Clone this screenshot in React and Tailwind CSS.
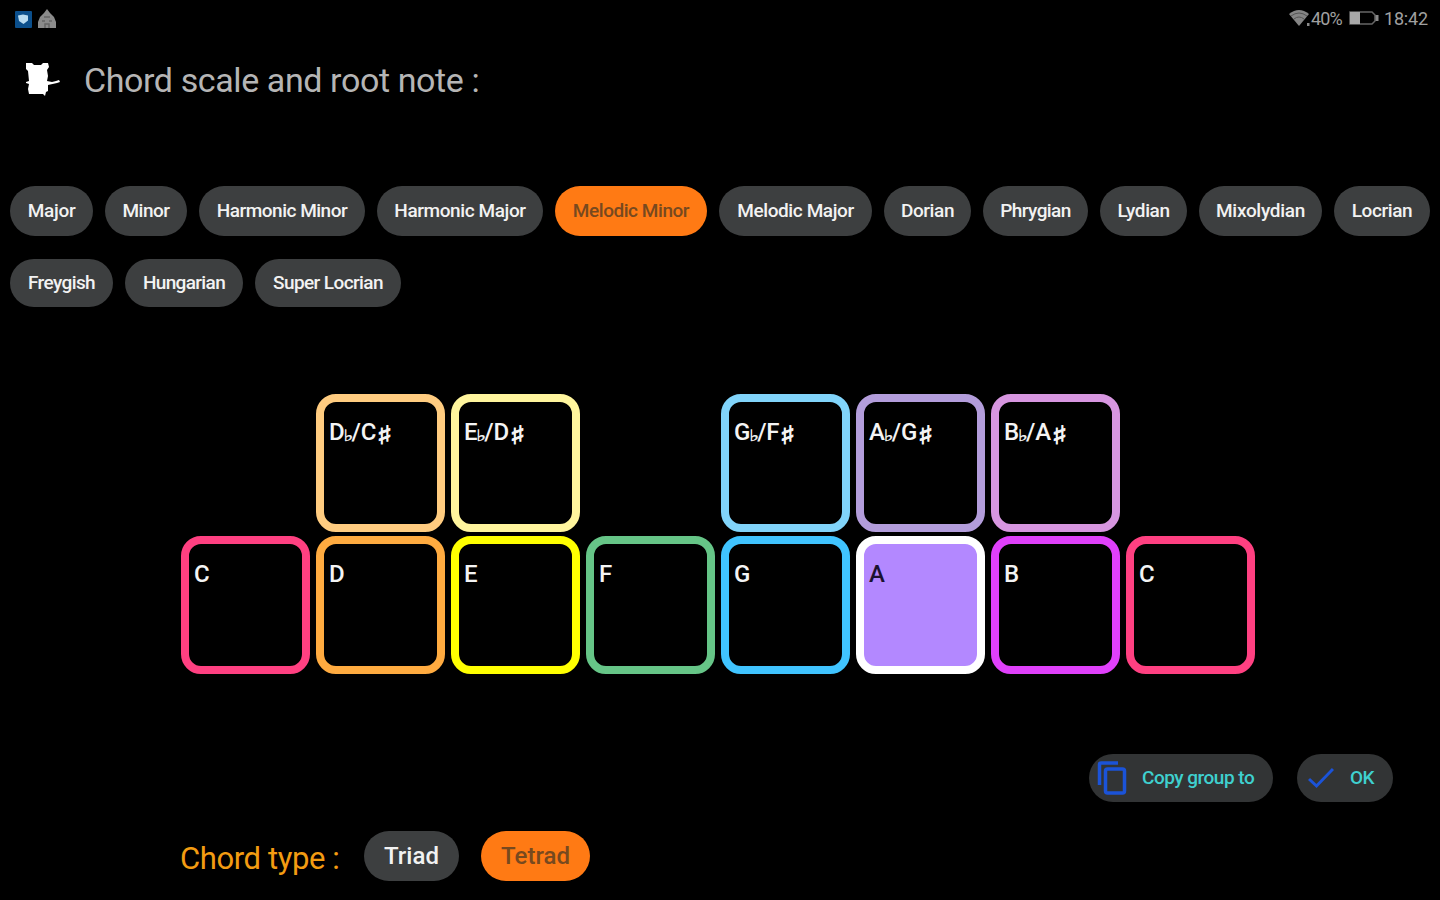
import React, { useState } from 'react';

const SCALES = [
    [
        { name: 'Major', width: 'w-[83px]', tracking: 'tracking-[-0.3px]' },
        { name: 'Minor', width: 'w-[82px]', tracking: 'tracking-[-0.5px]' },
        { name: 'Harmonic Minor', width: 'w-[166px]', tracking: 'tracking-[-0.5px]' },
        { name: 'Harmonic Major', width: 'w-[166px]', tracking: 'tracking-[-0.4px]' },
        { name: 'Melodic Minor', width: 'w-[152px]', tracking: 'tracking-[-0.45px]' },
        { name: 'Melodic Major', width: 'w-[153px]', tracking: 'tracking-[-0.4px]' },
        { name: 'Dorian', width: 'w-[87px]', tracking: 'tracking-[-0.4px]' },
        { name: 'Phrygian', width: 'w-[105px]', tracking: 'tracking-[-0.6px]' },
        { name: 'Lydian', width: 'w-[87px]', tracking: 'tracking-[-0.4px]' },
        { name: 'Mixolydian', width: 'w-[123px]', tracking: 'tracking-[-0.3px]' },
        { name: 'Locrian', width: 'w-[96px]', tracking: 'tracking-[-0.4px]' }
    ],
    [
        { name: 'Freygish', width: 'w-[103px]', tracking: 'tracking-[-0.6px]' },
        { name: 'Hungarian', width: 'w-[118px]', tracking: 'tracking-[-0.65px]' },
        { name: 'Super Locrian', width: 'w-[146px]', tracking: 'tracking-[-0.6px]' }
    ]
];

// null leaves a gap in the row, like on a piano
const BLACK_KEYS = [
    null,
    { flat: 'D', sharp: 'C', border: 'border-[#ffcc80]' },
    { flat: 'E', sharp: 'D', border: 'border-[#fff59d]' },
    null,
    { flat: 'G', sharp: 'F', border: 'border-[#81d4fa]' },
    { flat: 'A', sharp: 'G', border: 'border-[#b39ddb]' },
    { flat: 'B', sharp: 'A', border: 'border-[#d796e0]' },
    null
];

const WHITE_KEYS = [
    { note: 'C', border: 'border-[#ff4081]' },
    { note: 'D', border: 'border-[#ffab40]' },
    { note: 'E', border: 'border-[#ffff00]' },
    { note: 'F', border: 'border-[#66c587]' },
    { note: 'G', border: 'border-[#40c4ff]' },
    { note: 'A', border: 'border-[#b388ff]' },
    { note: 'B', border: 'border-[#e040fb]' },
    { note: 'C', border: 'border-[#ff4081]' }
];

const StatusBar = () => (
    <div className="h-[38px] pl-[15px] pr-[11px] flex items-center justify-between text-[#a0a0a0]">
        <div className="flex items-center gap-[5px]">
            <svg className="w-[17px] h-[17px]" viewBox="0 0 17 17">
                <rect width="17" height="17" rx="1" fill="#0b4f8c" />
                <path d="M3 4.5l5-1 5 1v5L8.500 13 4 10z" fill="#b9dcf2" />
            </svg>
            <svg className="w-5 h-5" viewBox="0 0 20 20">
                <path d="M10 0l3 4 4 4 2 5v6H1v-6l2-5 4-4z" fill="#8b8b8b" />
                <path d="M7 8h6M5 12h3m4 0h3M8 19v-4h4v4" fill="none" stroke="#666" strokeWidth="1.500" />
            </svg>
        </div>
        <div className="flex items-center -mt-0.5 text-[18px]">
            <svg className="w-[22px] h-[18px]" viewBox="0 0 22 18">
                <path d="M0 5Q10 -3 20 5L10 17z" fill="#858585" />
                <path d="M2 7Q10 1 18 7M5 10Q10 6 15 10" fill="none" stroke="#555" strokeWidth="1" />
                <rect x="18" y="14" width="2.500" height="3" fill="#8a8a8a" />
            </svg>
            <span className="w-[33px] tracking-[-0.9px]">40%</span>
            <svg className="w-[32px] h-[14px] ml-[4px]" viewBox="0 0 32 14">
                <path d="M2 1h22l3 3v6l-3 3H2z" fill="none" stroke="#666" strokeWidth="1.500" />
                <rect x="2" y="1" width="10" height="12" fill="#a8a8a8" />
                <rect x="27.500" y="4" width="3" height="6" fill="#8a8a8a" />
            </svg>
            <span className="ml-[4px] w-[45px] tracking-[-0.2px]">18:42</span>
        </div>
    </div>
);

const Chip = ({ active, onClick, className, children }) => (
    <button
        onClick={onClick}
        className={`flex shrink-0 items-center justify-center rounded-full whitespace-nowrap font-medium ${active ? 'bg-[#ff7a14] text-[#77491f]' : 'bg-[#3d3f40] text-[#f2f2f2]'
            } ${className}`}
    >
        {children}
    </button>
);

const Key = ({ border, fill = '', children }) => (
    <div className={`w-[129px] h-[138px] rounded-[20px] border-[8px] pl-[5px] pt-[13px] text-[24px] leading-[34px] font-medium ${border} ${fill || 'text-[#f4f4f4]'}`}>
        {children}
    </div>
);

const App = () => {
    const [scale, setScale] = useState('Melodic Minor');
    const [root, setRoot] = useState(5);
    const [chordType, setChordType] = useState('Tetrad');

    return (
        <div className="w-[1440px] h-[900px] overflow-hidden bg-black font-['Roboto',sans-serif]">
            <StatusBar />

            <header className="flex items-center h-[86px] pl-[25px]">
                <svg className="w-[36px] h-[34px] -mt-1" viewBox="0 0 36 34">
                    <path
                        d="M1 1h6l2 2h7l2-2h5l1 4-2 3 1 6-1 5 5 1 4-1 3-1 1 2-3 1-9 2v6l-2 1-1 4-2-2H4l-1-5 1-5-3-1v-1l3-1-1-10-2-2z"
                        fill="#fff"
                    />
                </svg>
                <h1 className="ml-[23px] -mt-0.5 text-[34px] leading-none tracking-[-0.4px] text-[#b5b5b5]">Chord scale and root note :</h1>
            </header>

            <section className="mt-[62px] pl-[10px] flex flex-col gap-[23px]">
                {SCALES.map((row, i) => (
                    <div key={i} className="flex gap-3">
                        {row.map((s) => (
                            <Chip
                                key={s.name}
                                active={scale === s.name}
                                onClick={() => setScale(s.name)}
                                className={`text-[19px] ${i === 0 ? 'h-[50px]' : 'h-[48px]'} ${s.width} ${s.tracking}`}
                            >
                                {s.name}
                            </Chip>
                        ))}
                    </div>
                ))}
            </section>

            <section className="mt-[87px] pl-[181px] flex flex-col gap-1">
                <div className="flex gap-1.5">
                    {BLACK_KEYS.map((k, i) => k ? (
                        <Key key={i} border={k.border}>
                            <span className="flex items-baseline tracking-[-0.2px]">
                                {k.flat}
                                <span className="w-[8px] -ml-px text-[21px] leading-none font-bold font-['DejaVu_Sans',sans-serif] scale-y-75 origin-bottom [-webkit-text-stroke:0.5px]">♭</span>
                                /{k.sharp}
                                <span className="ml-px text-[30px] leading-none font-bold translate-y-[5px] font-['DejaVu_Sans',sans-serif] scale-x-110 scale-y-85 [-webkit-text-stroke:1px]">♯</span>
                            </span>
                        </Key>
                    ) : <div key={i} className="w-[129px]" />)}
                </div>
                <div className="flex gap-1.5">
                    {WHITE_KEYS.map((k, i) => (
                        <div key={i} onClick={() => setRoot(i)}>
                            <Key
                                border={root === i ? 'border-white' : k.border}
                                fill={root === i ? 'bg-[#b388ff] text-[#1c1230]' : ''}
                            >
                                {k.note}
                            </Key>
                        </div>
                    ))}
                </div>
            </section>

            <div className="mt-[80px] pr-[47px] flex justify-end gap-6">
                <button className="w-[184px] h-[48px] pl-[8px] flex items-center rounded-full bg-[#323435] text-[19px] font-medium text-[#3fd0cf]">
                    <svg className="w-[32px] h-[36px]" viewBox="0 0 32 36" fill="none" stroke="#1b53d8" strokeWidth="3.500">
                        <path d="M2.500 25V4.500Q2.500 3 4 3H21" />
                        <rect x="8.500" y="9" width="19" height="24" rx="2" />
                    </svg>
                    <span className="ml-[13px] whitespace-nowrap tracking-[-0.5px]">Copy group to</span>
                </button>
                <button className="w-[96px] h-[48px] pl-[11px] flex items-center rounded-full bg-[#323435] text-[19px] font-medium text-[#3fd0cf]">
                    <svg className="w-[26px] h-[22px]" viewBox="0 0 26 22" fill="none" stroke="#1b53d8" strokeWidth="3">
                        <path d="M1 12l7.500 7L25 2" />
                    </svg>
                    <span className="ml-[16px] tracking-[-0.5px]">OK</span>
                </button>
            </div>

            <div className="mt-[29px] pl-[180px] flex items-center">
                <span className="w-[184px] pt-1 text-[31px] leading-none tracking-[-0.4px] text-[#f39c12]">Chord type :</span>
                <Chip active={chordType === 'Triad'} onClick={() => setChordType('Triad')} className="w-[95px] h-[50px] text-[24px]">
                    Triad
                </Chip>
                <Chip active={chordType === 'Tetrad'} onClick={() => setChordType('Tetrad')} className="ml-[22px] w-[109px] h-[50px] text-[24px]">
                    Tetrad
                </Chip>
            </div>
        </div>
    );
};

export default App;
